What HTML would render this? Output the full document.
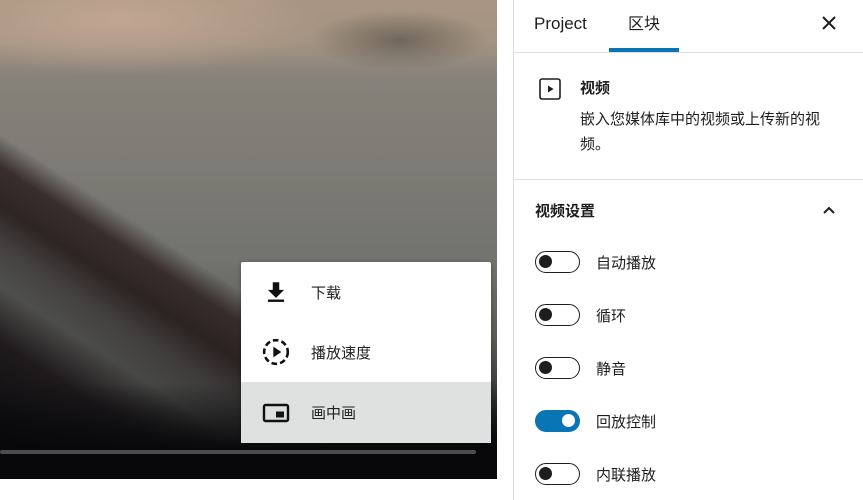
<!DOCTYPE html>
<html><head><meta charset="utf-8"><style>
*{margin:0;padding:0;box-sizing:border-box}
html,body{width:863px;height:500px;overflow:hidden}
body{background:#fff;font-family:"Liberation Sans","Noto Sans CJK SC",sans-serif;position:relative;color:#1e1e1e}
#vid{position:absolute;left:0;top:0;width:497px;height:479px;overflow:hidden;
background:
 linear-gradient(180deg,rgba(8,8,10,0) 0%,rgba(8,8,10,0) 80%,#08080a 94%),
 radial-gradient(ellipse 200px 55px at 120px 20px,rgba(200,170,150,.8),rgba(190,160,140,0)),
 radial-gradient(ellipse 90px 30px at 400px 40px,rgba(60,58,52,.5),rgba(60,58,52,0)),
 linear-gradient(213deg,rgba(0,0,0,0) 0%,rgba(0,0,0,0) 57%,rgba(50,38,38,.9) 61%,rgba(40,30,30,.93) 66%,rgba(60,58,58,.85) 71%,rgba(72,72,70,.8) 76%,rgba(28,24,26,.95) 83%,#0c0c0e 95%),
 linear-gradient(180deg,#a89682 0%,#a49482 9%,#87827a 16%,#7c7b74 35%,#72736d 55%,#5c5d59 70%,#2a2a2a 88%,#121214 100%);}
.l{position:absolute}
#menu{position:absolute;left:241px;top:262px;width:250px;height:181px;background:#fff;border-radius:2px;box-shadow:0 1px 4px rgba(0,0,0,.3)}
.mi{height:60px;display:flex;align-items:center;font-size:15px;color:#222}
.mi svg{margin-left:21px;width:28px;height:28px}
.mi span{margin-left:21px}
#side{position:absolute;left:513px;top:0;width:350px;height:500px;border-left:1px solid #ddd;overflow:hidden}
.tog{position:absolute;left:21px;width:45px;height:22px;border:1.5px solid #1e1e1e;border-radius:11px}
.tog::after{content:"";position:absolute;left:3px;top:3px;width:13px;height:13px;border-radius:50%;background:#1e1e1e}
.tog.on{background:#0a75b5;border-color:#0a75b5}
.tog.on::after{left:26px;background:#fff}
.tl{position:absolute;left:82px;font-size:15px}
</style></head><body>
<div id="vid">
 <div class="l" style="left:0;top:450px;width:476px;height:4px;border-radius:2px;background:#4c4c4c"></div>
</div>
<div id="menu">
 <div class="mi"><svg viewBox="0 0 26 26"><path d="M10 4h6v7h4.5l-7.5 7.5-7.5-7.5h4.5z" fill="#111"/><rect x="5.5" y="20" width="15" height="2.2" fill="#111"/></svg><span>下载</span></div>
 <div class="mi"><svg viewBox="0 0 26 26"><circle cx="13" cy="13" r="11" fill="none" stroke="#111" stroke-width="2.4" stroke-dasharray="5.2 2.9"/><path d="M10.5 8v10l7.5-5z" fill="#111"/></svg><span>播放速度</span></div>
 <div class="mi" style="background:#dfe0e0;height:61px"><svg viewBox="0 0 28 28"><rect x="2" y="6" width="24" height="16" rx="1.5" fill="none" stroke="#111" stroke-width="2.4"/><rect x="14" y="12.5" width="8" height="6" fill="#111"/></svg><span>画中画</span></div>
</div>
<div id="side">
 <div class="l" style="left:20px;top:14px;font-size:17px;line-height:20px">Project</div>
 <div class="l" style="left:114px;top:15px;font-size:16px;line-height:20px">区块</div>
 <div class="l" style="left:95px;top:48px;width:70px;height:4px;background:#0a75b5"></div>
 <div class="l" style="left:0;top:52px;width:350px;height:1px;background:#ddd"></div>
 <svg class="l" style="left:308px;top:16px" width="14" height="14" viewBox="0 0 14 14"><path d="M1 1l12 12M13 1L1 13" stroke="#1e1e1e" stroke-width="2"/></svg>
 <svg class="l" style="left:25px;top:78px" width="22" height="22" viewBox="0 0 22 22"><rect x="1" y="1" width="20" height="20" rx="2" fill="none" stroke="#1e1e1e" stroke-width="1.6"/><path d="M9 7.5v7l5.5-3.5z" fill="#1e1e1e"/></svg>
 <div class="l" style="left:66px;top:79px;font-size:15px;font-weight:bold;line-height:20px">视频</div>
 <div class="l" style="left:66px;top:107px;width:260px;font-size:15px;line-height:25px">嵌入您媒体库中的视频或上传新的视频。</div>
 <div class="l" style="left:0;top:179px;width:350px;height:1px;background:#ddd"></div>
 <div class="l" style="left:21px;top:202px;font-size:15px;font-weight:bold;line-height:20px">视频设置</div>
 <svg class="l" style="left:308px;top:205px" width="14" height="10" viewBox="0 0 14 10"><path d="M2 8l5-5 5 5" fill="none" stroke="#1e1e1e" stroke-width="2"/></svg>
 <div class="tog" style="top:251px"></div><div class="tl" style="top:252px">自动播放</div>
 <div class="tog" style="top:304px"></div><div class="tl" style="top:305px">循环</div>
 <div class="tog" style="top:357px"></div><div class="tl" style="top:358px">静音</div>
 <div class="tog on" style="top:410px"></div><div class="tl" style="top:411px">回放控制</div>
 <div class="tog" style="top:463px"></div><div class="tl" style="top:464px">内联播放</div>
</div>
</body></html>
